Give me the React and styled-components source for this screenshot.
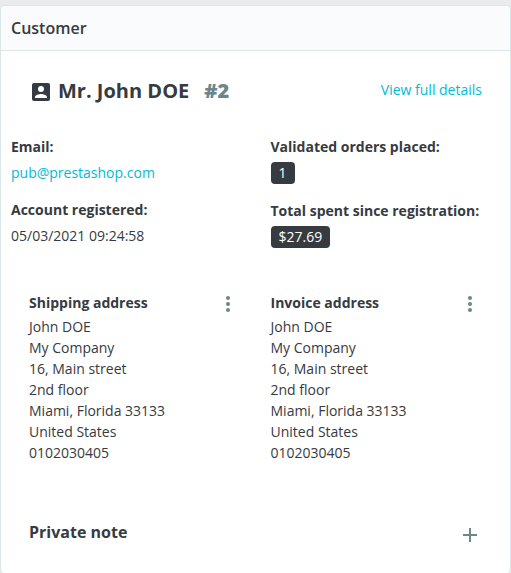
import React from 'react';
import styled, { createGlobalStyle } from 'styled-components';

const Global = createGlobalStyle`
  * { box-sizing: border-box; }
  body { margin: 0; background: #eaebec; font: 14px/21px "Open Sans", sans-serif; color: #363a41; overflow: hidden; }
  p, h1, h2, h3 { margin: 0; }
`;
const Page = styled.div`height: 573px; padding-top: 5px; overflow: hidden;`;
const Card = styled.section`height: 568px; background: #fff; border: 1px solid #dbe6e9; border-bottom-color: #fff; border-radius: 5px;`;
const CardHeader = styled.h3`height: 45px; padding: 0 10px; font-size: 16px; line-height: 45px; font-weight: 600; background: #fafbfc; border-bottom: 1px solid #dbe6e9; border-radius: 5px 5px 0 0;`;
const TitleRow = styled.header`display: flex; justify-content: space-between; align-items: flex-start; height: 28px; margin: 26px 28px 0;`;
const Name = styled.h1`display: flex; align-items: center; font-size: 20px; line-height: 28px; font-weight: 700;`;
const PersonIcon = styled.svg`width: 24px; height: 24px; margin: 2px 5px 0 0; fill: #363a41;`;
const Identifier = styled.strong`margin-left: 15px; color: #6c868e; font-weight: 800;`;
const Link = styled.a`color: #00bbd3; text-decoration: none;`;
const DetailsLink = styled(Link)`margin-top: 2px;`;
const Stats = styled.div`display: grid; grid-template-columns: 259.5px 1fr; margin-top: 31px; padding-left: 10px; height: 156px;`;
const Stat = styled.div`height: ${p => p.$height || 63}px;`;
const Label = styled.p`font-weight: 700; margin-bottom: 5px;`;
const Badge = styled.span`display: block; width: fit-content; padding: 0 8px; height: 22px; line-height: 22px; border-radius: 4px; background: #363a41; color: #fff;`;
const Addresses = styled.div`display: grid; grid-template-columns: 241.5px 1fr; padding-left: 28px;`;
const AddressHead = styled.div`display: flex; justify-content: space-between; align-items: flex-start; height: 24px; margin-right: ${p => p.$end}px;`;
const Heading = styled.h3`font-size: 14px; line-height: 21px; font-weight: 700;`;
const Icon = styled.svg`width: 24px; height: 24px; fill: #6c868e;`;
const Note = styled.footer`display: flex; justify-content: space-between; align-items: flex-start; margin: 57px 28px 0; height: 27px;`;
const NoteTitle = styled.h2`font-size: 16px; line-height: 24px; font-weight: 700;`;
const PlusIcon = styled(Icon)`margin-top: 3px;`;

const lines = ['John DOE', 'My Company', '16, Main street', '2nd floor', 'Miami, Florida 33133', 'United States', '0102030405'];

function Address({ title, end }) {
  return (
    <div>
      <AddressHead $end={end}>
        <Heading>{title}</Heading>
        <Icon viewBox="0 0 24 24"><circle cx="12" cy="6" r="2" /><circle cx="12" cy="12" r="2" /><circle cx="12" cy="18" r="2" /></Icon>
      </AddressHead>
      {lines.map(line => <p key={line}>{line}</p>)}
    </div>
  );
}

export default function App() {
  return (
    <Page>
      <Global />
      <Card>
        <CardHeader>Customer</CardHeader>
        <TitleRow>
          <Name>
            <PersonIcon viewBox="0 0 24 24"><path d="M3 5v14a2 2 0 0 0 2 2h14a2 2 0 0 0 2-2V5a2 2 0 0 0-2-2H5a2 2 0 0 0-2 2zm12 4a3 3 0 1 1-6 0 3 3 0 0 1 6 0zm-9 8c0-2 4-3.100 6-3.100s6 1.100 6 3.100v1H6v-1z" /></PersonIcon>
            Mr. John DOE
            <Identifier>#2</Identifier>
          </Name>
          <DetailsLink>View full details</DetailsLink>
        </TitleRow>
        <Stats>
          <div>
            <Stat><Label>Email:</Label><Link>pub@prestashop.com</Link></Stat>
            <Stat><Label>Account registered:</Label><p>05/03/2021 09:24:58</p></Stat>
          </div>
          <div>
            <Stat $height={64}><Label>Validated orders placed:</Label><Badge>1</Badge></Stat>
            <Stat><Label>Total spent since registration:</Label><Badge>$27.69</Badge></Stat>
          </div>
        </Stats>
        <Addresses>
          <Address title="Shipping address" end={30.5} />
          <Address title="Invoice address" end={28} />
        </Addresses>
        <Note>
          <NoteTitle>Private note</NoteTitle>
          <PlusIcon viewBox="0 0 24 24"><path d="M19 13h-6v6h-2v-6H5v-2h6V5h2v6h6v2z" /></PlusIcon>
        </Note>
      </Card>
    </Page>
  );
}
